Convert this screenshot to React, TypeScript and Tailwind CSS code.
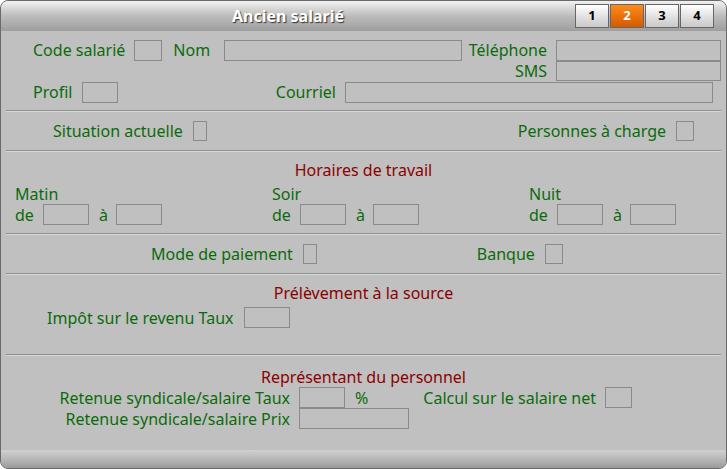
const F = "font-['Liberation_Sans',Arial,sans-serif]";

function Box({ w, h = 21, className = "" }: { w: number; h?: number; className?: string }) {
  return <div className={`border border-[#8a8a8a] shrink-0 ${className}`} style={{ width: w, height: h }} />;
}

function Lbl({ children, className = "" }: { children: React.ReactNode; className?: string }) {
  return <span className={`text-[16px] text-[#0b6b0b] whitespace-nowrap leading-none ${className}`}>{children}</span>;
}

function Sep() {
  return <div className="mx-[5px] h-[2px] border-t border-[#8f8f8f] border-b-white bg-[#d8d8d8]" />;
}

function Heading({ children }: { children: React.ReactNode }) {
  return <div className="text-center text-[16px] text-[#8b0000] leading-none">{children}</div>;
}

export default function App() {
  return (
    <div className={`${F} w-[727px] h-[469px] bg-white`}>
      <div className="w-[727px] h-[469px] bg-[#c0c0c0] rounded-[8px] border border-[#6a6a6a] overflow-hidden flex flex-col">
        <div className="h-[30px] shrink-0 bg-gradient-to-b from-[#f2f2f2] via-[#bcbcbc] to-[#9e9e9e] flex items-center">
          <div className="flex-1 text-center text-white font-bold text-[16px] [text-shadow:1px_1px_1px_#333]">Ancien salarié</div>
          <div className="flex gap-[1px] mr-[12px]">
            {["1", "2", "3", "4"].map((n) => (
              <div key={n} className={`w-[34px] h-[24px] flex items-center justify-center text-[13px] font-bold border border-[#666] ${n === "2" ? "bg-gradient-to-b from-[#ff8a1a] to-[#d45a00] text-white" : "bg-gradient-to-b from-white to-[#c8c8c8] text-black"}`}>{n}</div>
            ))}
          </div>
        </div>

        <div className="flex-1 flex flex-col">
          <div className="flex items-center h-[22px] mt-[8px]">
            <Lbl className="ml-[32px]">Code salarié</Lbl>
            <Box w={28} className="ml-[9px]" />
            <Lbl className="ml-[11px]">Nom</Lbl>
            <Box w={238} className="ml-[14px]" />
            <Lbl className="ml-auto mr-[9px]">Téléphone</Lbl>
            <Box w={165} className="mr-[5px]" />
          </div>
          <div className="flex items-center h-[20px]">
            <Lbl className="ml-auto mr-[9px]">SMS</Lbl>
            <Box w={165} h={20} className="mr-[5px]" />
          </div>
          <div className="flex items-center h-[22px]">
            <Lbl className="ml-[32px]">Profil</Lbl>
            <Box w={36} className="ml-[10px]" />
            <Lbl className="ml-auto mr-[9px]">Courriel</Lbl>
            <Box w={368} className="mr-[13px]" />
          </div>
          <div className="h-[7px]" />
          <Sep />
          <div className="flex items-center h-[20px] mt-[9px] mb-[9px]">
            <Lbl className="ml-[52px]">Situation actuelle</Lbl>
            <Box w={14} h={20} className="ml-[10px]" />
            <Lbl className="ml-auto mr-[10px]">Personnes à charge</Lbl>
            <Box w={18} h={20} className="mr-[32px]" />
          </div>
          <Sep />
          <div className="mt-[10px]"><Heading>Horaires de travail</Heading></div>
          <div className="flex mt-[8px]">
            {[{ x: 14 }, { x: 271 - 14 - 182 }, { x: 528 - 271 - 182 }].map((c, k) => (
              <div key={k} className="flex flex-col" style={{ marginLeft: c.x }}>
                <Lbl className="h-[14px]">{["Matin", "Soir", "Nuit"][k]}</Lbl>
                <div className="flex items-center mt-[4px] w-[182px]">
                  <Lbl>de</Lbl>
                  <Box w={46} className="ml-[9px]" />
                  <Lbl className="ml-[10px]">à</Lbl>
                  <Box w={46} className="ml-[8px]" />
                </div>
              </div>
            ))}
          </div>
          <div className="h-[8px]" />
          <Sep />
          <div className="flex items-center h-[20px] mt-[9px] mb-[9px]">
            <Lbl className="ml-[150px]">Mode de paiement</Lbl>
            <Box w={14} h={20} className="ml-[10px]" />
            <Lbl className="ml-[160px]">Banque</Lbl>
            <Box w={18} h={20} className="ml-[10px]" />
          </div>
          <Sep />
          <div className="mt-[10px]"><Heading>Prélèvement à la source</Heading></div>
          <div className="flex items-center h-[21px] mt-[6px]">
            <Lbl className="ml-[46px]">Impôt sur le revenu Taux</Lbl>
            <Box w={46} className="ml-[10px]" />
          </div>
          <div className="h-[26px]" />
          <Sep />
          <div className="mt-[13px]"><Heading>Représentant du personnel</Heading></div>
          <div className="flex items-center h-[21px] mt-[2px]">
            <div className="w-[289px] text-right"><Lbl>Retenue syndicale/salaire Taux</Lbl></div>
            <Box w={46} className="ml-[9px]" />
            <Lbl className="ml-[10px]">%</Lbl>
            <Lbl className="ml-[55px]">Calcul sur le salaire net</Lbl>
            <Box w={27} className="ml-[9px]" />
          </div>
          <div className="flex items-center h-[21px]">
            <div className="w-[289px] text-right"><Lbl>Retenue syndicale/salaire Prix</Lbl></div>
            <Box w={110} className="ml-[9px]" />
          </div>
        </div>
        <div className="h-[18px] shrink-0 bg-gradient-to-b from-[#d0d0d0] via-[#b8b8b8] to-[#9a9a9a]" />
      </div>
    </div>
  );
}
